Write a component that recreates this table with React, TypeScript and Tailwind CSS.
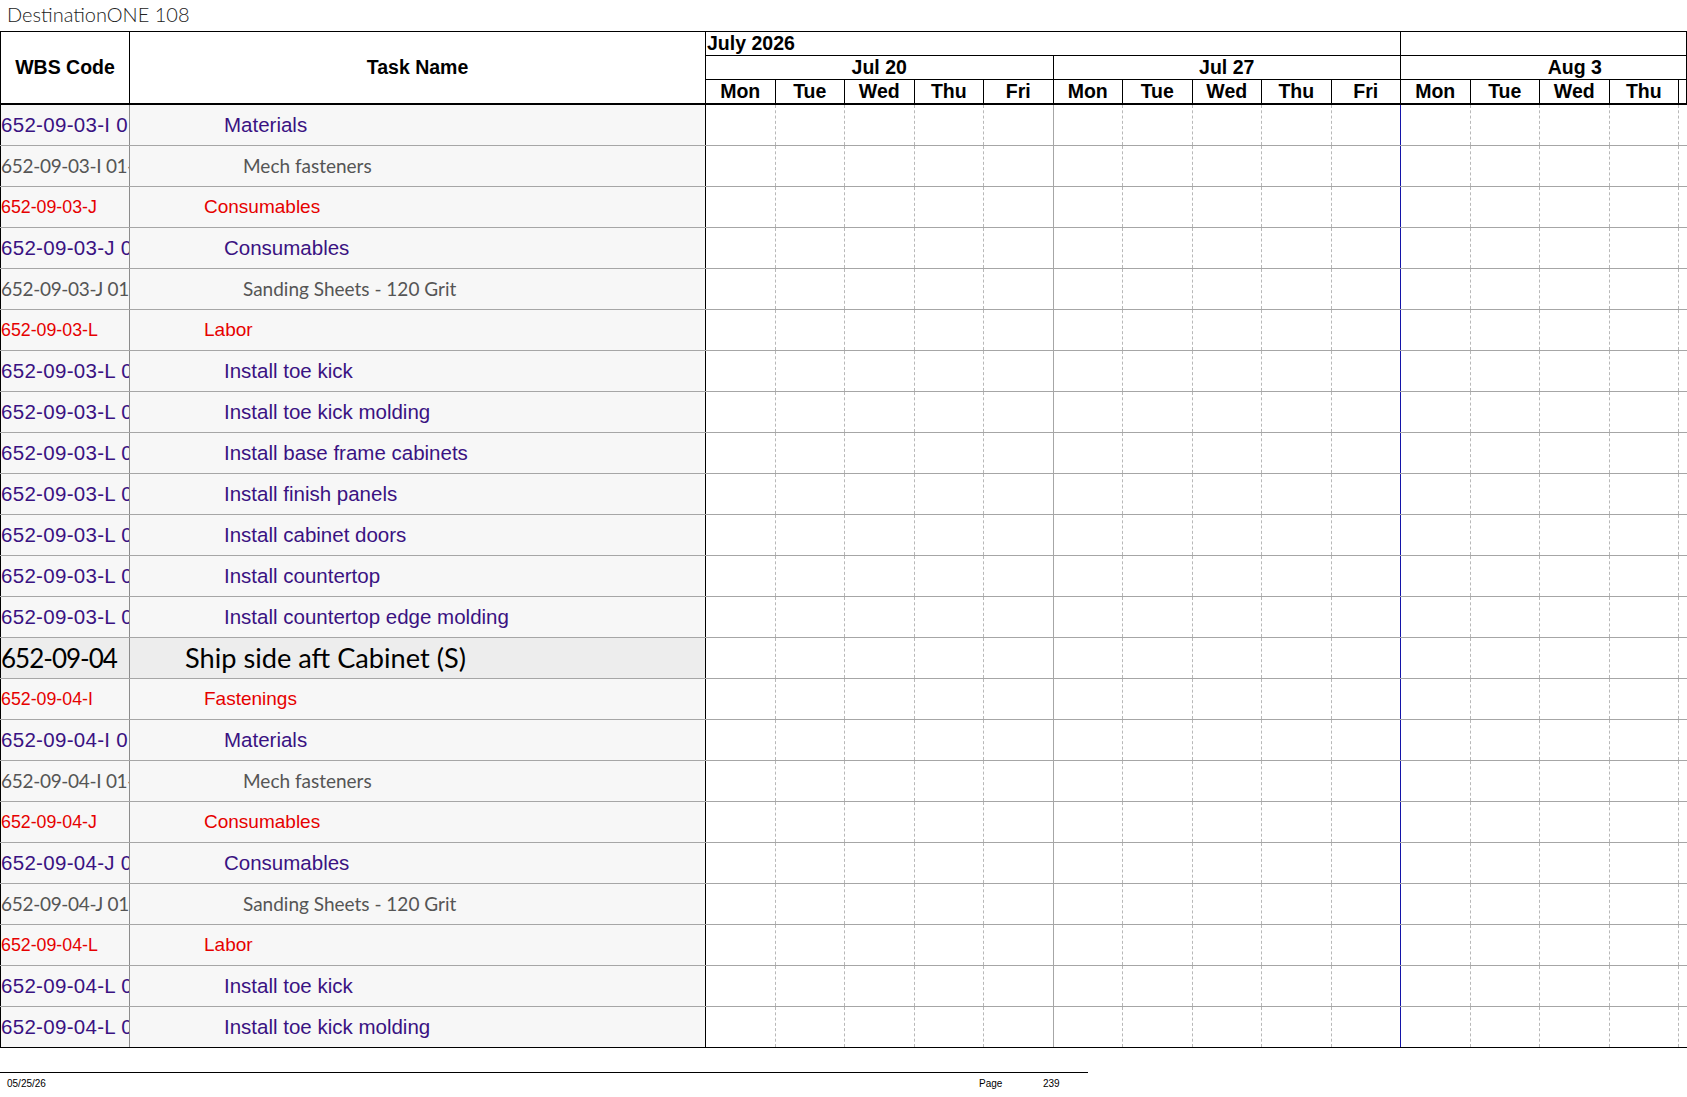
import React from 'react';

type Kind = 'blue' | 'red' | 'gray' | 'big';

// wbs code, task name — visible rows of page 239
const rows: [Kind, string, string][] = [
  ['blue', '652-09-03-I 01', 'Materials'],
  ['gray', '652-09-03-I 01-01', 'Mech fasteners'],
  ['red', '652-09-03-J', 'Consumables'],
  ['blue', '652-09-03-J 01', 'Consumables'],
  ['gray', '652-09-03-J 01-01', 'Sanding Sheets - 120 Grit'],
  ['red', '652-09-03-L', 'Labor'],
  ['blue', '652-09-03-L 01', 'Install toe kick'],
  ['blue', '652-09-03-L 02', 'Install toe kick molding'],
  ['blue', '652-09-03-L 03', 'Install base frame cabinets'],
  ['blue', '652-09-03-L 04', 'Install finish panels'],
  ['blue', '652-09-03-L 05', 'Install cabinet doors'],
  ['blue', '652-09-03-L 06', 'Install countertop'],
  ['blue', '652-09-03-L 07', 'Install countertop edge molding'],
  ['big', '652-09-04', 'Ship side aft Cabinet (S)'],
  ['red', '652-09-04-I', 'Fastenings'],
  ['blue', '652-09-04-I 01', 'Materials'],
  ['gray', '652-09-04-I 01-01', 'Mech fasteners'],
  ['red', '652-09-04-J', 'Consumables'],
  ['blue', '652-09-04-J 01', 'Consumables'],
  ['gray', '652-09-04-J 01-01', 'Sanding Sheets - 120 Grit'],
  ['red', '652-09-04-L', 'Labor'],
  ['blue', '652-09-04-L 01', 'Install toe kick'],
  ['blue', '652-09-04-L 02', 'Install toe kick molding'],
];

const wbsText: Record<Kind, string> = {
  blue: "font-['Liberation_Sans',Arial,sans-serif] text-[20.5px] tracking-[0.3px] text-[#3a1282]",
  red: "font-['Liberation_Sans',Arial,sans-serif] text-[17.8px] text-[#e60000]",
  gray: "font-['Lato',sans-serif] text-[19px] tracking-[-0.3px] text-[#555555]",
  big: "font-['Lato',sans-serif] text-[26px] tracking-[-1px] text-black",
};

const taskText: Record<Kind, string> = {
  blue: "pl-[94px] font-['Liberation_Sans',Arial,sans-serif] text-[20.5px] text-[#3a1282]",
  red: "pl-[74px] font-['Liberation_Sans',Arial,sans-serif] text-[19px] text-[#e60000]",
  gray: "pl-[113px] font-['Lato',sans-serif] text-[19px] text-[#555555]",
  big: "pl-[55px] font-['Lato',sans-serif] text-[27.2px] text-black",
};

const days = ['Mon', 'Tue', 'Wed', 'Thu', 'Fri', 'Mon', 'Tue', 'Wed', 'Thu', 'Fri', 'Mon', 'Tue', 'Wed', 'Thu', 'Fri'];

// week boundary solid, month boundary blue, other days dashed
function dayLine(i: number) {
  if (i === 4) return 'border-r border-solid border-[#a6a6a6]';
  if (i === 9) return 'border-r border-solid border-[#1414a8]';
  return 'border-r border-dashed border-[#b8b8b8]';
}

function Row({ kind, code, name, last }: { kind: Kind; code: string; name: string; last: boolean }) {
  const bg = kind === 'big' ? 'bg-[#ededed]' : 'bg-[#f7f7f7]';
  return (
    <div className={`flex h-[41px] border-b ${last ? 'border-black' : 'border-[#a6a6a6]'}`}>
      <div className={`w-[130px] shrink-0 border-l border-r border-l-black border-r-[#8c8c8c] overflow-hidden whitespace-nowrap flex items-center ${bg}`}>
        <span className={wbsText[kind]}>{code}</span>
      </div>
      <div className={`w-[576px] shrink-0 border-r border-black whitespace-nowrap flex items-center ${bg}`}>
        <span className={taskText[kind]}>{name}</span>
      </div>
      <div className="w-[981px] shrink-0 overflow-hidden flex bg-white">
        {days.map((d, i) => (
          <div key={i} className={`w-[69.5px] shrink-0 h-full ${dayLine(i)}`} />
        ))}
      </div>
    </div>
  );
}

export default function App() {
  return (
    <div className="w-[1687px] h-[1097px] bg-white overflow-hidden text-black">
      <div className="h-[31px] pl-[7px] pt-[1px] font-['Lato',sans-serif] font-light text-[20px] leading-[26px] text-[#222]">
        DestinationONE 108
      </div>

      {/* header */}
      <div className="flex h-[74px] border-t border-b-2 border-black font-['Liberation_Sans',Arial,sans-serif] font-bold text-[19.5px]">
        <div className="w-[130px] shrink-0 border-l border-r border-black flex items-center justify-center">WBS Code</div>
        <div className="w-[576px] shrink-0 border-r border-black flex items-center justify-center">Task Name</div>
        <div className="w-[981px] shrink-0 overflow-hidden border-r border-black">
          <div className="w-[1042.5px] flex flex-col leading-[22px]">
            <div className="flex h-[24px] border-b border-black">
              <div className="w-[695px] shrink-0 border-r border-black pl-px">July 2026</div>
              <div className="flex-1" />
            </div>
            <div className="flex h-[24px] border-b border-black text-center">
              <div className="w-[347.5px] shrink-0 border-r border-black">Jul 20</div>
              <div className="w-[347.5px] shrink-0 border-r border-black">Jul 27</div>
              <div className="w-[347.5px] shrink-0">Aug 3</div>
            </div>
            <div className="flex h-[23px] text-center">
              {days.map((d, i) => (
                <div key={i} className="w-[69.5px] shrink-0 border-r border-black">{d}</div>
              ))}
            </div>
          </div>
        </div>
      </div>

      {/* body */}
      <div>
        {rows.map(([kind, code, name], i) => (
          <Row key={i} kind={kind} code={code} name={name} last={i === rows.length - 1} />
        ))}
      </div>

      {/* footer */}
      <div className="mt-[24px] w-[1088px] border-t border-black flex pt-[5px] font-['Liberation_Sans',Arial,sans-serif] text-[10px] leading-[12px]">
        <span className="w-[979px] shrink-0 pl-[7px]">05/25/26</span>
        <span className="w-[64px] shrink-0">Page</span>
        <span>239</span>
      </div>
    </div>
  );
}
